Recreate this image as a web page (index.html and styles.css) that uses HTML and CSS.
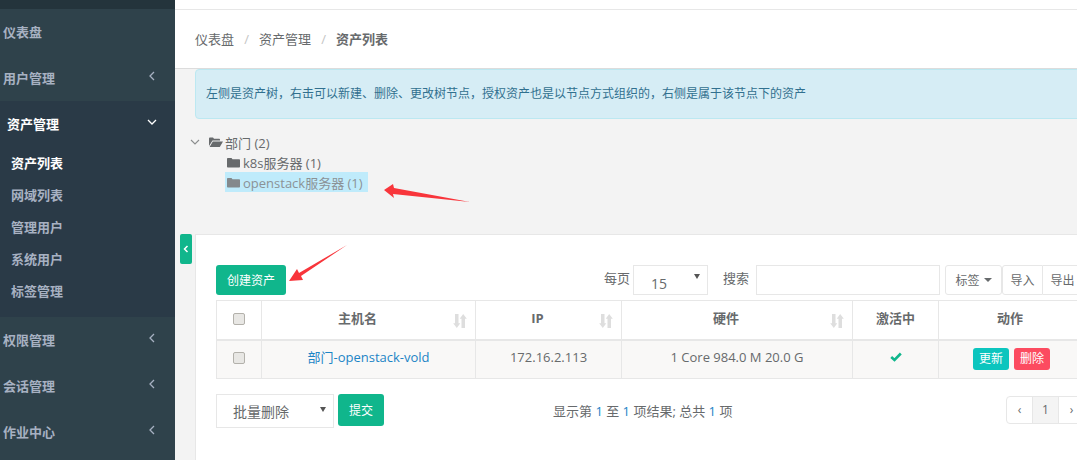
FILE: index.html
```html
<!DOCTYPE html>
<html lang="zh-CN">
  <head>
    <meta charset="UTF-8" />
    <title>资产列表</title>
    <link rel="stylesheet" href="styles.css">
  </head>
  <body>
    <nav class="sidebar">
      <div class="sidebarTop"></div>
      <a class="navItem">仪表盘</a>
      <a class="navItem">用户管理
        <svg class="chev" width="8" height="10" viewBox="0 0 8 10"><path d="M6 1 2 5l4 4" /></svg>
      </a>
      <div class="navGroup">
        <a class="navItem active">资产管理
          <svg class="chev" width="10" height="8" viewBox="0 0 10 8"><path d="M1 2l4 4 4-4" /></svg>
        </a>
        <a class="subItem active">资产列表</a>
        <a class="subItem">网域列表</a>
        <a class="subItem">管理用户</a>
        <a class="subItem">系统用户</a>
        <a class="subItem">标签管理</a>
      </div>
      <a class="navItem">权限管理
        <svg class="chev" width="8" height="10" viewBox="0 0 8 10"><path d="M6 1 2 5l4 4" /></svg>
      </a>
      <a class="navItem">会话管理
        <svg class="chev" width="8" height="10" viewBox="0 0 8 10"><path d="M6 1 2 5l4 4" /></svg>
      </a>
      <a class="navItem">作业中心
        <svg class="chev" width="8" height="10" viewBox="0 0 8 10"><path d="M6 1 2 5l4 4" /></svg>
      </a>
    </nav>

    <main class="main">
      <div class="topStrip"></div>
      <div class="breadcrumb">
        <span>仪表盘</span><i>/</i><span>资产管理</span><i>/</i><b>资产列表</b>
      </div>
      <div class="alert">左侧是资产树，右击可以新建、删除、更改树节点，授权资产也是以节点方式组织的，右侧是属于该节点下的资产</div>

      <div class="tree">
        <div class="treeRow">
          <svg class="treeChev" width="10" height="8" viewBox="0 0 10 8"><path d="M1 2l4 4 4-4" /></svg>
          <svg class="folder" width="14" height="12" viewBox="0 0 14 12"><path d="M0 2.500C0 2 .5 1.500 1 1.500h3l1 1.200h5c.5 0 1 .4 1 .9V4.500H3.500L0 10zM3.800 5.500H14L10.800 11H.6z" /></svg>
          <span>部门 (2)</span>
        </div>
        <div class="treeRow child">
          <svg class="folder" width="13" height="11" viewBox="0 0 13 11"><path d="M0 2c0-.6.5-1 1-1h3.500l1 1.300H12c.6 0 1 .4 1 1V9.500c0 .6-.4 1-1 1H1c-.5 0-1-.4-1-1z" /></svg>
          <span>k8s服务器 (1)</span>
        </div>
        <div class="treeRow child selected">
          <svg class="folder" width="13" height="11" viewBox="0 0 13 11"><path d="M0 2c0-.6.5-1 1-1h3.500l1 1.300H12c.6 0 1 .4 1 1V9.500c0 .6-.4 1-1 1H1c-.5 0-1-.4-1-1z" /></svg>
          <span>openstack服务器 (1)</span>
        </div>
      </div>

      <div class="panelWrap">
        <button class="collapseBtn" type="button">
          <svg width="6" height="8" viewBox="0 0 6 8"><path d="M4.500 1 1.500 4l3 3" /></svg>
        </button>
        <section class="panel">
          <div class="toolbar">
            <button class="btn primary createBtn" type="button">创建资产</button>
            <div class="tools">
              <label class="toolLabel">每页</label>
              <div class="fakeSelect pageSize">15<em></em></div>
              <label class="toolLabel searchLabel">搜索</label>
              <div class="searchInput"></div>
              <div class="btn plain tagBtn">标签<em></em></div>
              <div class="btnGroup">
                <div class="btn plain">导入</div>
                <div class="btn plain">导出</div>
              </div>
            </div>
          </div>

          <table class="assets">
            <thead>
              <tr>
                <th class="colCheck"><span class="checkbox"></span></th>
                <th class="colName sortable">主机名<svg class="sort" width="14" height="14" viewBox="0 0 14 13" preserveAspectRatio="none"><path d="M2 0h3.500v8.500h1.800L3.800 13 .2 8.500H2zM8.500 13H12V4.500h1.800L10.200 0 6.700 4.500h1.800z" /></svg></th>
                <th class="colIp sortable">IP<svg class="sort" width="14" height="14" viewBox="0 0 14 13" preserveAspectRatio="none"><path d="M2 0h3.500v8.500h1.800L3.800 13 .2 8.500H2zM8.500 13H12V4.500h1.800L10.200 0 6.700 4.500h1.800z" /></svg></th>
                <th class="colHw sortable">硬件<svg class="sort" width="14" height="14" viewBox="0 0 14 13" preserveAspectRatio="none"><path d="M2 0h3.500v8.500h1.800L3.800 13 .2 8.500H2zM8.500 13H12V4.500h1.800L10.200 0 6.700 4.500h1.800z" /></svg></th>
                <th class="colActive">激活中</th>
                <th class="colAction">动作</th>
              </tr>
            </thead>
            <tbody>
              <tr>
                <td><span class="checkbox"></span></td>
                <td><a class="hostLink">部门-openstack-vold</a></td>
                <td>172.16.2.113</td>
                <td>1 Core 984.0 M 20.0 G</td>
                <td><svg width="12" height="10" viewBox="0 0 12 10"><path class="tick" d="M1.200 5 4.500 8 10.800 1.500" /></svg></td>
                <td class="actions">
                  <span class="mini update">更新</span>
                  <span class="mini remove">删除</span>
                </td>
              </tr>
            </tbody>
          </table>

          <div class="footerRow">
            <div class="fakeSelect bulk">批量删除<em></em></div>
            <button class="btn primary submitBtn" type="button">提交</button>
            <div class="pageInfo">显示第 <u>1</u> 至 <u>1</u> 项结果; 总共 <u>1</u> 项</div>
            <div class="pager">
              <span>‹</span>
              <span class="current">1</span>
              <span>›</span>
            </div>
          </div>
        </section>
      </div>
    </main>

    <!-- 截图上手工标注的红色箭头 -->
    <svg class="marks" width="1077" height="460" viewBox="0 0 1077 460">
      <path d="M384 190 393 184 394 188 470 202 393 194 394 198z" />
      <path d="M289 281 297 269 299 273 347 245 301 276 303 280z" />
    </svg>
  </body>
</html>
```

FILE: styles.css
```css
:root {
  --main-font: "Open Sans", "Noto Sans CJK SC", sans-serif;
  --green: #10b68c;
  --line: #e7e7e7;
  --text: #676a6c;
}
* {
  box-sizing: border-box;
}
html,
body {
  margin: 0;
  height: 460px;
  overflow: hidden;
}
body {
  display: flex;
  position: relative;
  width: 1077px;
  font-family: var(--main-font);
  font-size: 13px;
  color: var(--text);
  background: #f3f3f3;
}

/* sidebar */
.sidebar {
  flex: 0 0 175px;
  height: 460px;
  background: #2f424b;
}
.sidebarTop {
  height: 9px;
  background: #24343c;
}
.navItem {
  display: flex;
  align-items: center;
  justify-content: space-between;
  height: 46px;
  padding: 0 19px 2px 3px;
  font-weight: bold;
  color: #a7b1c2;
}
.navItem.active {
  padding-left: 7px;
  padding-right: 18px;
  color: #fff;
}
.navGroup {
  height: 216px;
  background: #2a3a47;
}
.subItem {
  display: block;
  height: 32px;
  padding-left: 11px;
  line-height: 32px;
  font-weight: bold;
  color: #a7b1c2;
}
.subItem.active {
  color: #fff;
}
.chev {
  margin-top: -3px;
  fill: none;
  stroke: currentColor;
  stroke-width: 1.300;
}

/* header */
.main {
  flex: 0 0 902px;
}
.topStrip {
  height: 10px;
  background: #fff;
  border-bottom: 1px solid var(--line);
}
.breadcrumb {
  display: flex;
  align-items: center;
  height: 59px;
  padding-left: 20px;
  padding-bottom: 1px;
  background: #fff;
  border-bottom: 1px solid #dcdcdc;
}
.breadcrumb i {
  width: 25px;
  text-align: center;
  font-style: normal;
  color: #c4c4c4;
}
.breadcrumb b {
  font-weight: bold;
}
.alert {
  height: 50px;
  margin-left: 20px;
  width: 900px;
  padding-left: 10px;
  line-height: 48px;
  font-size: 12px;
  color: #31708f;
  background: #d6edf5;
  border: 1px solid #bce8f1;
  border-radius: 4px;
}

/* tree */
.tree {
  height: 115px;
  padding: 13px 0 0 20px;
}
.treeRow {
  display: flex;
  align-items: center;
  height: 20px;
  font-size: 13px;
}
.treeRow span {
  margin-left: 3px;
}
.treeChev {
  margin: 0 9px 0 -5px;
  fill: none;
  stroke: #8b8d8e;
  stroke-width: 1.100;
}
.treeRow > .folder:nth-child(2) + span {
  margin-left: 2px;
}
.folder {
  fill: #676a6c;
}
.treeRow.child {
  margin-left: 32px;
}
.treeRow.selected {
  width: 143px;
  margin-left: 30px;
  padding-left: 2px;
  background: #bfebfb;
}
.treeRow.selected span {
  color: #8b9296;
}
.treeRow.selected .folder {
  fill: #84898c;
}

/* panel */
.panelWrap {
  display: flex;
  align-items: flex-start;
  height: 226px;
  padding-left: 5px;
}
.collapseBtn {
  display: flex;
  align-items: center;
  justify-content: center;
  flex: 0 0 12px;
  height: 30px;
  padding: 0;
  border: 0;
  border-radius: 2px;
  background: var(--green);
}
.collapseBtn svg {
  fill: none;
  stroke: #fff;
  stroke-width: 1.500;
}
.panel {
  flex: 0 0 887px;
  height: 226px;
  margin-left: 3px;
  padding: 30px 0 0 20px;
  background: #fff;
  border-top: 1px solid var(--line);
  border-left: 1px solid var(--line);
}
.toolbar {
  display: flex;
  justify-content: space-between;
  width: 867px;
  height: 35px;
}
.tools {
  display: flex;
  align-items: flex-start;
}
.toolLabel {
  line-height: 26px;
  margin-right: 3px;
}
.searchLabel {
  margin-left: 15px;
  margin-right: 7px;
}
.btn {
  display: flex;
  align-items: center;
  justify-content: center;
  font-family: var(--main-font);
  font-size: 12px;
  border-radius: 3px;
}
.primary {
  border: 0;
  color: #fff;
  background: var(--green);
}
.plain {
  height: 30px;
  border: 1px solid var(--line);
  background: #fff;
}
.createBtn {
  width: 70px;
  height: 30px;
}
.fakeSelect {
  position: relative;
  background: #fff;
  border: 1px solid var(--line);
}
.fakeSelect em {
  position: absolute;
  top: 12px;
  right: 7px;
  border-top: 5px solid #555;
  border-left: 3px solid transparent;
  border-right: 3px solid transparent;
}
.pageSize {
  width: 75px;
  height: 30px;
  padding: 8px 0 0 17px;
  line-height: 20px;
  font-size: 14px;
}
.pageSize em {
  top: 8px;
}
.searchInput {
  width: 184px;
  height: 30px;
  border: 1px solid var(--line);
}
.tagBtn {
  width: 57px;
  margin-left: 5px;
}
.tagBtn em {
  margin-left: 4px;
  border-top: 4px solid #676a6c;
  border-left: 4px solid transparent;
  border-right: 4px solid transparent;
}
.btnGroup {
  display: flex;
}
.btnGroup .btn {
  width: 41px;
  border-radius: 3px 0 0 3px;
}
.btnGroup .btn + .btn {
  width: 40px;
  border-left: 0;
  border-radius: 0;
}

/* table */
.assets {
  width: 866px;
  table-layout: fixed;
  border-collapse: collapse;
}
.assets th,
.assets td {
  position: relative;
  border: 1px solid var(--line);
  text-align: center;
  padding: 0;
}
.assets th {
  height: 39px;
  padding-bottom: 4px;
  border-bottom-width: 2px;
  font-weight: bold;
}
.assets th.sortable {
  padding-right: 22px;
}
.assets td {
  height: 39px;
  padding-bottom: 5px;
  background: #f9f8f7;
}
.colCheck {
  width: 45px;
}
.colName {
  width: 214px;
}
.colIp {
  width: 146px;
}
.colHw {
  width: 231px;
}
.colActive {
  width: 86px;
}
.checkbox {
  display: inline-block;
  width: 12px;
  height: 12px;
  vertical-align: middle;
  background: #e8e7e4;
  border: 1px solid #b3b1ab;
  border-radius: 2px;
}
.sort {
  position: absolute;
  right: 8px;
  top: 13px;
  fill: #dedede;
}
.hostLink {
  color: #1c84c6;
}
.tick {
  fill: none;
  stroke: var(--green);
  stroke-width: 2.600;
}
.assets td.actions {
  padding: 0 0 0 34px;
  text-align: left;
  font-size: 12px;
}
.mini {
  display: inline-block;
  width: 36px;
  height: 22px;
  margin-right: 2px;
  border-radius: 3px;
  line-height: 22px;
  text-align: center;
  color: #fff;
}
.update {
  background: #0cc5be;
}
.remove {
  background: #fc4b60;
}

/* bottom row */
.footerRow {
  display: flex;
  align-items: flex-start;
  width: 869px;
  margin-top: 15px;
}
.bulk {
  width: 118px;
  height: 34px;
  padding-left: 16px;
  line-height: 34px;
  font-size: 14px;
}
.submitBtn {
  width: 46px;
  height: 32px;
  margin-left: 4px;
}
.pageInfo {
  flex: 1;
  padding-left: 169px;
  line-height: 34px;
  font-size: 13px;
}
.pageInfo u {
  text-decoration: none;
  color: #1c84c6;
}
.pager {
  display: flex;
  height: 28px;
  margin-top: 2px;
  border: 1px solid var(--line);
  border-radius: 4px;
  line-height: 26px;
  text-align: center;
}
.pager span {
  width: 25px;
  font-size: 12px;
}
.pager .current {
  width: 27px;
  background: #f4f4f4;
  border-left: 1px solid var(--line);
  border-right: 1px solid var(--line);
}

/* red arrows */
.marks {
  position: absolute;
  top: 0;
  left: 0;
  fill: #f8353b;
  pointer-events: none;
}
```
